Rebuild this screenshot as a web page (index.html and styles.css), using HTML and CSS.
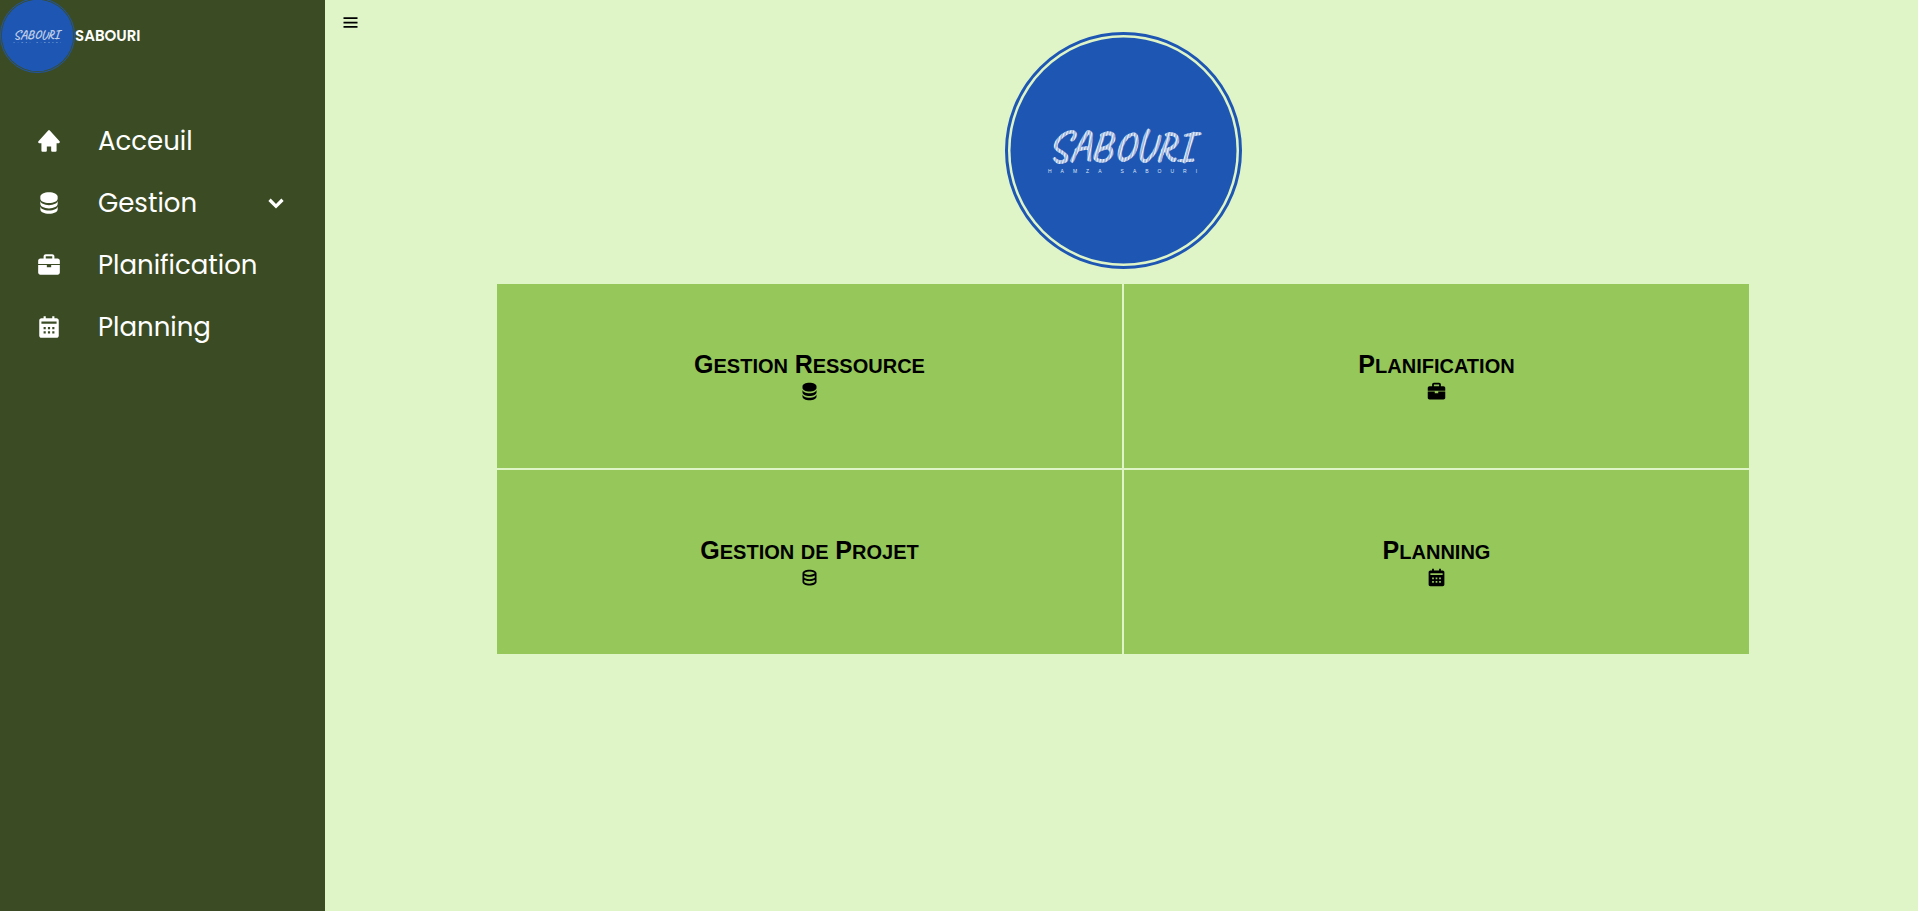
FILE: index.html
```html
<!DOCTYPE html>
<html lang="fr">
<head>
<meta charset="utf-8">
<meta name="viewport" content="width=device-width, initial-scale=1">
<title>Sabouri</title>
<link rel="stylesheet" href="styles.css">
</head>
<body>
<svg class="sprite" aria-hidden="true">
  <defs>
    <pattern id="brush" width="3" height="8" patternUnits="userSpaceOnUse" patternTransform="rotate(14)">
      <rect width="3" height="8" fill="#fff" fill-opacity=".55"/>
      <rect width="1.3" height="8" fill="#fff" fill-opacity=".8"/>
    </pattern>
  </defs>
  <symbol id="home" viewBox="0 0 24 24"><path d="M12.74 2.32a1 1 0 0 0-1.48 0l-9 10A1 1 0 0 0 3 14h2v7a1 1 0 0 0 1 1h3a1 1 0 0 0 1-1v-4h4v4a1 1 0 0 0 1 1h3a1 1 0 0 0 1-1v-7h2a1 1 0 0 0 1-1 1 1 0 0 0-.26-.68z"/></symbol>
  <symbol id="data" viewBox="0 0 24 24"><path d="M20 6c0-2.168-3.663-4-8-4S4 3.832 4 6v2c0 2.168 3.663 4 8 4s8-1.832 8-4V6zm-8 13c-4.337 0-8-1.832-8-4v3c0 2.168 3.663 4 8 4s8-1.832 8-4v-3c0 2.168-3.663 4-8 4z"/><path d="M20 10c0 2.168-3.663 4-8 4s-8-1.832-8-4v3c0 2.168 3.663 4 8 4s8-1.832 8-4v-3z"/></symbol>
  <symbol id="data-outline" viewBox="0 0 24 24"><path d="M20 17V7c0-2.168-3.663-4-8-4S4 4.832 4 7v10c0 2.168 3.663 4 8 4s8-1.832 8-4zM12 5c3.691 0 5.931 1.507 6 1.994C17.931 7.493 15.691 9 12 9S6.069 7.493 6 7.006C6.069 6.507 8.309 5 12 5zM6 9.607C7.479 10.454 9.637 11 12 11s4.521-.546 6-1.393v2.387c-.069.499-2.309 2.006-6 2.006s-5.931-1.507-6-2V9.607zM6 17v-2.393C7.479 15.454 9.637 16 12 16s4.521-.546 6-1.393v2.387c-.069.499-2.309 2.006-6 2.006s-5.931-1.507-6-2z"/></symbol>
  <symbol id="briefcase" viewBox="0 0 24 24"><path d="M20 6h-3V4c0-1.103-.897-2-2-2H9c-1.103 0-2 .897-2 2v2H4c-1.103 0-2 .897-2 2v3h20V8c0-1.103-.897-2-2-2zM9 4h6v2H9V4zm5 10h-4v-2H2v7c0 1.103.897 2 2 2h16c1.103 0 2-.897 2-2v-7h-8v2z"/></symbol>
  <symbol id="calendar" viewBox="0 0 24 24"><path d="M21 20V6c0-1.103-.897-2-2-2h-2V2h-2v2H9V2H7v2H5c-1.103 0-2 .897-2 2v14c0 1.103.897 2 2 2h14c1.103 0 2-.897 2-2zM9 18H7v-2h2v2zm0-4H7v-2h2v2zm4 4h-2v-2h2v2zm0-4h-2v-2h2v2zm4 4h-2v-2h2v2zm0-4h-2v-2h2v2zm2-5H5V7h14v2z"/></symbol>
  <symbol id="chevron" viewBox="0 0 24 24"><path d="M16.939 7.939 12 12.879l-4.939-4.94-2.121 2.122L12 17.121l7.061-7.06z"/></symbol>
  <symbol id="menu" viewBox="0 0 24 24"><path d="M4 6h16v2H4zm0 5h16v2H4zm0 5h16v2H4z"/></symbol>
</svg>

<div class="app">
  <aside class="sidebar">
    <div class="brand">
      <svg class="brand-logo" viewBox="0 0 237 237" role="img" aria-label="Hamza Sabouri">
        <circle class="logo-ring" cx="118.5" cy="118.5" r="117"/>
        <circle class="logo-disc" cx="118.5" cy="118.5" r="113"/>
        <text class="wordmark" x="115" y="129" text-anchor="middle">SABOURI</text>
        <text class="tagline" x="43" y="141">HAMZA SABOURI</text>
      </svg>
      <span class="brand-name">SABOURI</span>
    </div>
    <nav>
      <ul class="nav-list">
        <li class="nav-item"><a class="nav-link" href="#accueil"><span class="nav-icon"><svg class="icon-lg"><use href="#home"/></svg></span>Acceuil</a></li>
        <li class="nav-item">
          <a class="nav-link" href="#gestion"><span class="nav-icon"><svg class="icon-lg"><use href="#data"/></svg></span>Gestion</a>
          <button class="nav-toggle" type="button" aria-label="Ouvrir Gestion"><svg class="icon-lg"><use href="#chevron"/></svg></button>
        </li>
        <li class="nav-item"><a class="nav-link" href="#planification"><span class="nav-icon"><svg class="icon-lg"><use href="#briefcase"/></svg></span>Planification</a></li>
        <li class="nav-item"><a class="nav-link" href="#planning"><span class="nav-icon"><svg class="icon-lg"><use href="#calendar"/></svg></span>Planning</a></li>
      </ul>
    </nav>
  </aside>

  <div class="page">
    <header class="topbar">
      <button class="menu-button" type="button" aria-label="Menu"><svg class="icon"><use href="#menu"/></svg></button>
    </header>
    <main class="content">
      <svg class="hero-logo" viewBox="0 0 237 237" role="img" aria-label="Hamza Sabouri">
        <circle class="logo-ring" cx="118.5" cy="118.5" r="117"/>
        <circle class="logo-disc" cx="118.5" cy="118.5" r="113"/>
        <text class="wordmark" x="115" y="129" text-anchor="middle">SABOURI</text>
        <text class="tagline" x="43" y="141">HAMZA SABOURI</text>
      </svg>
      <div class="tiles">
        <a class="tile" href="#ressource"><span class="tile-title"><span class="cap-word">Gestion</span> <span class="cap-word">Ressource</span></span><svg class="icon"><use href="#data"/></svg></a>
        <a class="tile" href="#planification"><span class="tile-title"><span class="cap-word">Planification</span></span><svg class="icon"><use href="#briefcase"/></svg></a>
        <a class="tile" href="#projet"><span class="tile-title"><span class="cap-word">Gestion</span> <span class="small-word">de</span> <span class="cap-word">Projet</span></span><svg class="icon"><use href="#data-outline"/></svg></a>
        <a class="tile" href="#planning"><span class="tile-title"><span class="cap-word">Planning</span></span><svg class="icon"><use href="#calendar"/></svg></a>
      </div>
    </main>
  </div>
</div>
</body>
</html>
```

FILE: styles.css
```css
* {
  box-sizing: border-box;
  margin: 0;
  padding: 0;
}

body {
  background: #dff5c8;
  color: #000;
  font-family: Poppins, Inter, sans-serif;
}

a {
  color: inherit;
  text-decoration: none;
}

button {
  border: 0;
  background: none;
  color: inherit;
  font: inherit;
  cursor: pointer;
}

svg {
  display: block;
  flex: none;
  fill: currentColor;
}

.sprite {
  position: absolute;
  width: 0;
  height: 0;
}

.icon {
  width: 21px;
  height: 21px;
}

.icon-lg {
  width: 26px;
  height: 26px;
}

.app {
  display: flex;
  min-height: 100vh;
}

/* Sidebar */
.sidebar {
  flex: none;
  width: 325px;
  background: #3b4c24;
  color: #fff;
}

.brand {
  display: flex;
  align-items: center;
  height: 70px;
}

.brand-logo {
  width: 75px;
  height: 75px;
}

.brand-name {
  font-size: 15px;
  font-weight: 600;
}

.nav-list {
  margin-top: 40px;
  list-style: none;
}

.nav-item {
  display: flex;
  height: 62px;
}

.nav-link {
  display: flex;
  flex: 1;
  align-items: center;
  font-size: 26px;
}

.nav-icon,
.nav-toggle {
  display: flex;
  flex: none;
  align-items: center;
  justify-content: center;
  width: 98px;
}

/* Logo */
.logo-ring {
  fill: none;
  stroke: #1e56b3;
  stroke-width: 3px;
}

.logo-disc {
  fill: #1e56b3;
}

.wordmark {
  fill: url(#brush);
  font: 700 43px Caveat, "Open Sans", sans-serif;
}

.tagline {
  fill: #dde6f5;
  font: 5px "Liberation Sans", sans-serif;
  letter-spacing: 9px;
}

/* Page */
.page {
  flex: 1;
}

.topbar {
  display: flex;
  height: 32px;
  padding: 12px 15px 0;
}

.menu-button {
  height: 21px;
}

.content {
  display: flex;
  flex-direction: column;
  align-items: center;
  gap: 15px;
  padding: 0 169px 0 172px;
}

.hero-logo {
  width: 237px;
  height: 237px;
}

.tiles {
  display: grid;
  grid-template-columns: 1fr 1fr;
  gap: 2px;
  align-self: stretch;
}

.tile {
  display: flex;
  flex-direction: column;
  align-items: center;
  gap: 3px;
  padding: 66px 16px;
  background: #95c75a;
}

.tile-title {
  height: 28px;
  font-family: "Liberation Sans", Arial, sans-serif;
  font-size: 24px;
  font-weight: 700;
  line-height: 28px;
}

/* Capitals with a taller first letter */
.cap-word,
.small-word {
  display: inline-block;
  font-size: 20px;
  text-transform: uppercase;
}

.cap-word::first-letter {
  font-size: 25px;
}
```
